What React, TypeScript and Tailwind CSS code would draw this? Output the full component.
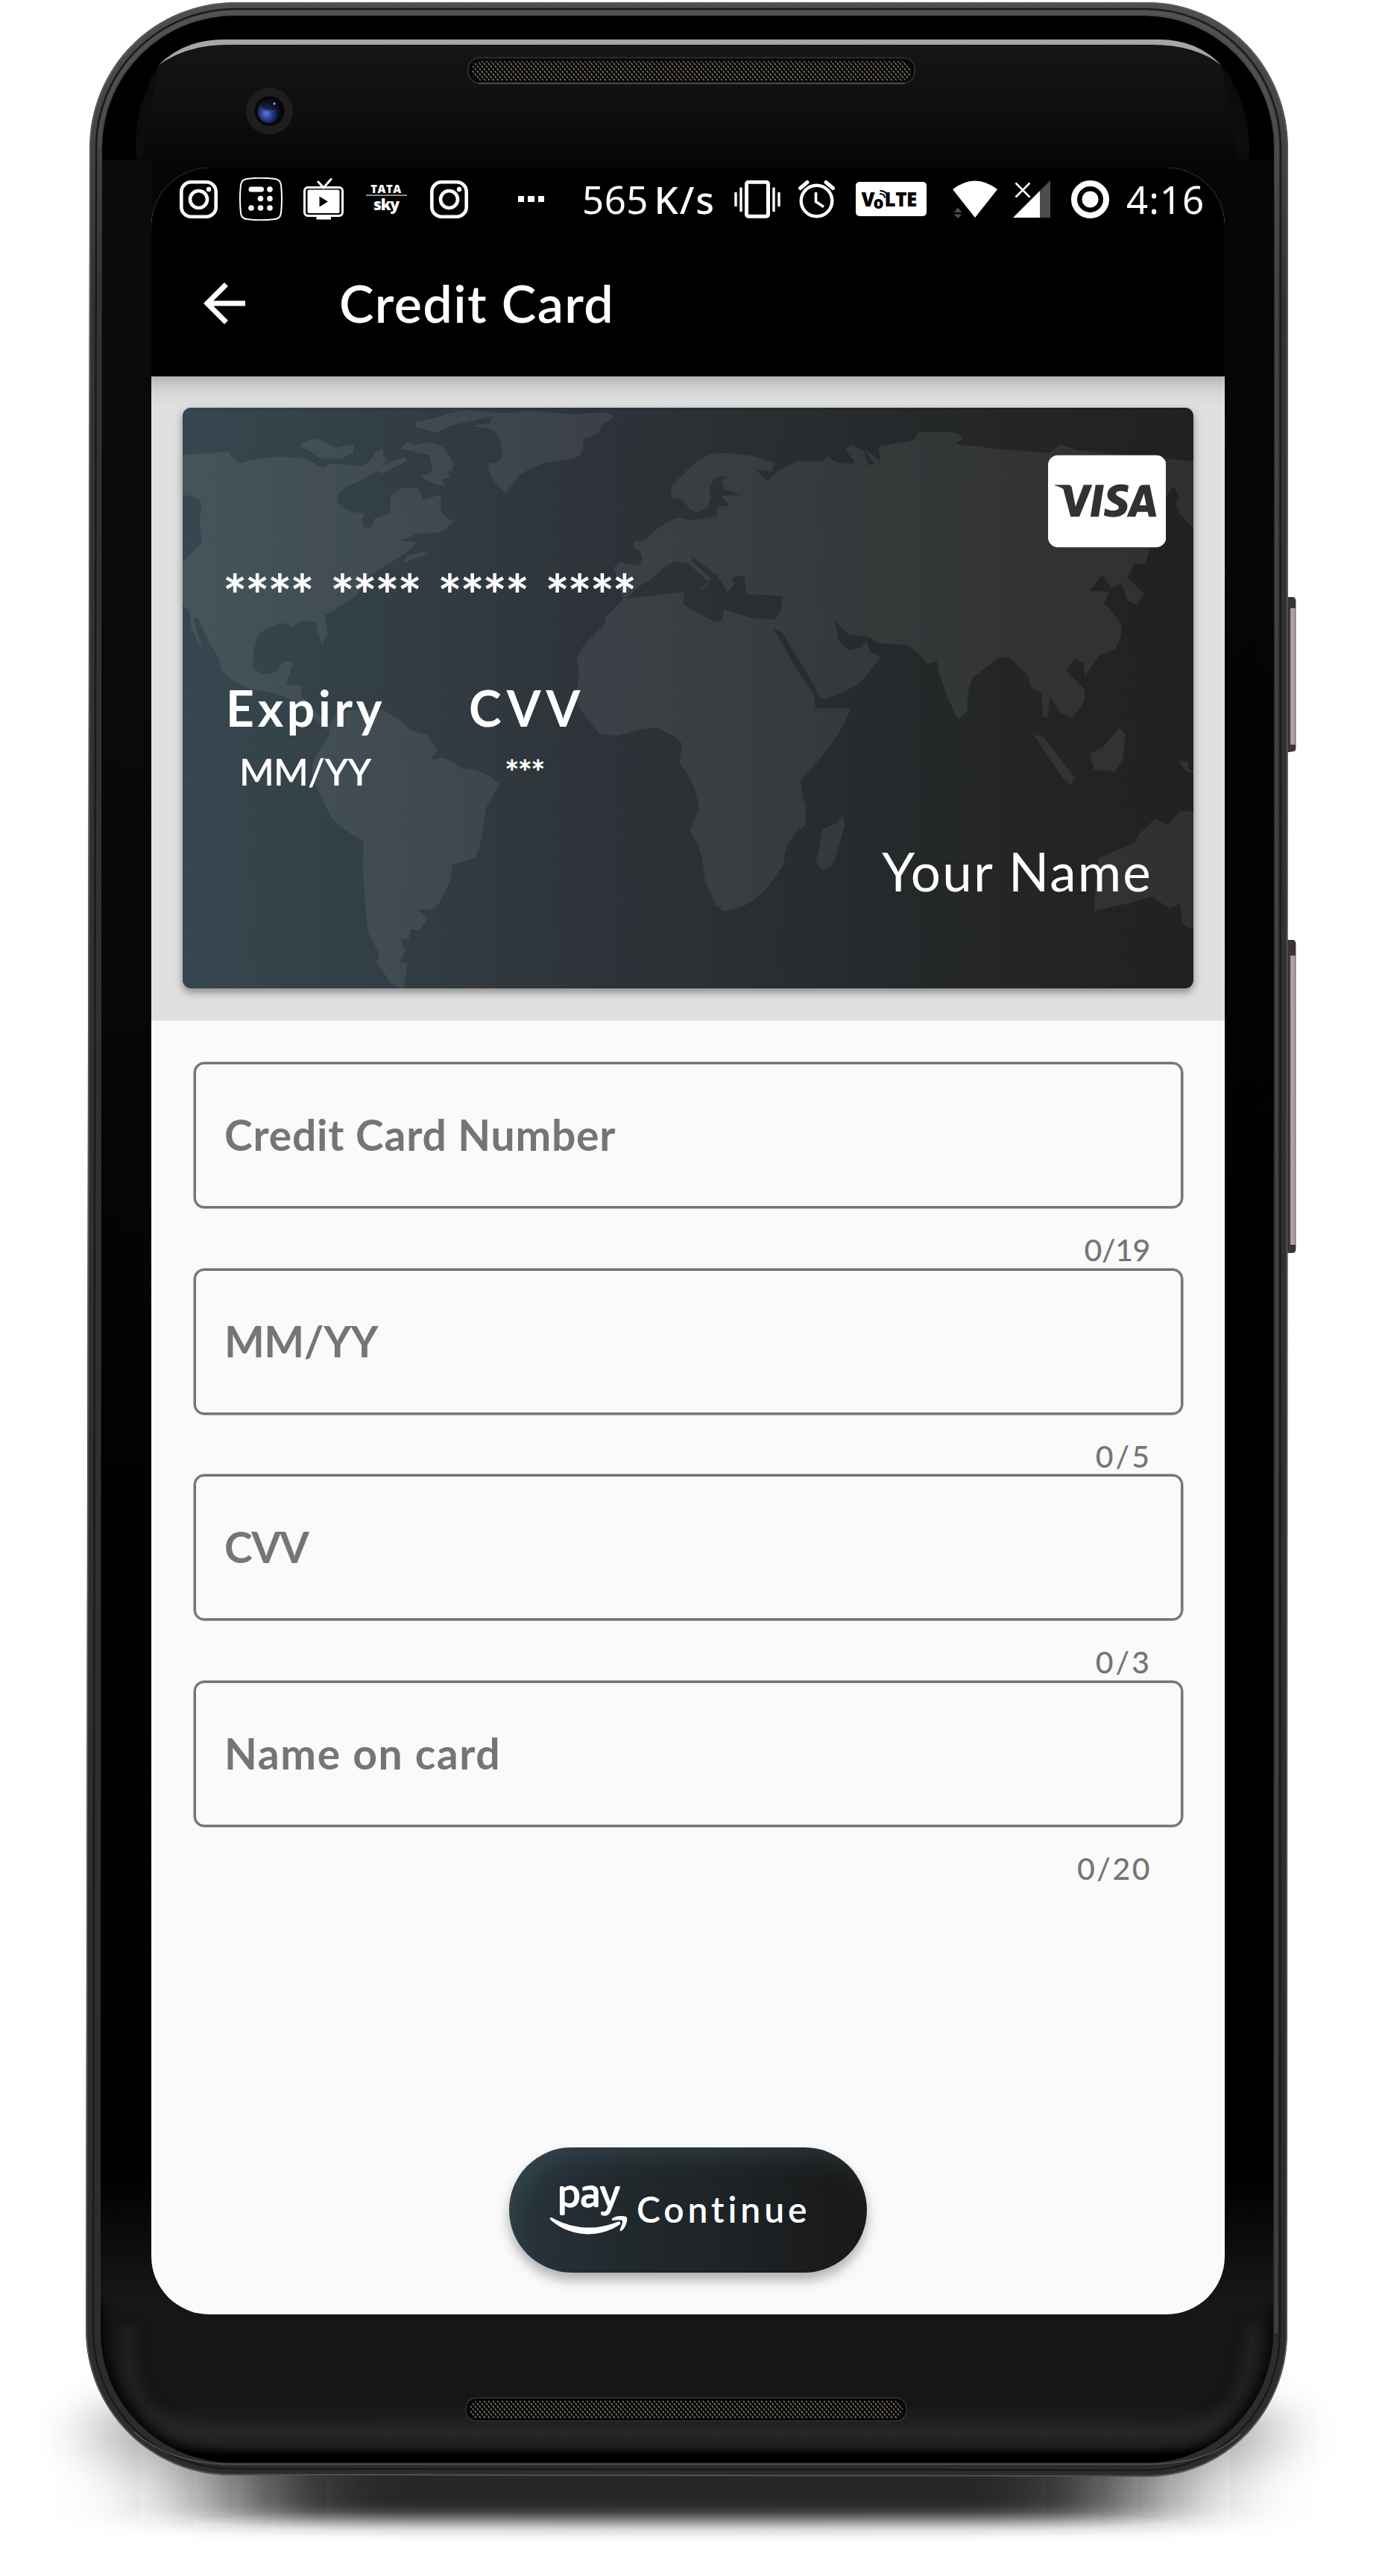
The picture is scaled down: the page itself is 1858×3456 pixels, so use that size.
import React from 'react';
import { MdArrowBack } from 'react-icons/md';
import { FaAmazonPay, FaCcVisa } from 'react-icons/fa';

/* ---------- Device ---------- */

function DeviceFrame() {
  return (
    <svg className="absolute inset-0" width="1858" height="3456" viewBox="0 0 1858 3456" aria-hidden="true">
      <defs>
        <filter id="floor" x="-40%" y="-200%" width="180%" height="500%">
          <feGaussianBlur stdDeviation="100 12" />
        </filter>
        <filter id="halo" x="-30%" y="-100%" width="160%" height="300%">
          <feGaussianBlur stdDeviation="38 30" />
        </filter>
        <filter id="soft8" x="-10%" y="-30%" width="120%" height="160%">
          <feGaussianBlur stdDeviation="8" />
        </filter>
        <linearGradient id="rim" x1="0" y1="0" x2="0" y2="1">
          <stop offset="0" stopColor="#4e4e4e" />
          <stop offset="0.05" stopColor="#444444" />
          <stop offset="0.12" stopColor="#333333" />
          <stop offset="1" stopColor="#2c2c2c" />
        </linearGradient>
        <linearGradient id="glass" gradientUnits="userSpaceOnUse" x1="0" y1="60" x2="0" y2="3306">
          <stop offset="0" stopColor="#151515" />
          <stop offset="0.025" stopColor="#0f0f0f" />
          <stop offset="0.05" stopColor="#060606" />
          <stop offset="0.2" stopColor="#050505" />
          <stop offset="0.5" stopColor="#010101" />
          <stop offset="0.88" stopColor="#000000" />
          <stop offset="0.93" stopColor="#161616" />
          <stop offset="0.975" stopColor="#161616" />
          <stop offset="0.988" stopColor="#232323" />
          <stop offset="0.993" stopColor="#1b1b1b" />
          <stop offset="0.9965" stopColor="#000000" />
          <stop offset="1" stopColor="#000000" />
        </linearGradient>
        <linearGradient id="leftBezel" x1="0" y1="0" x2="0" y2="1">
          <stop offset="0" stopColor="#0c0c0c" />
          <stop offset="0.4" stopColor="#0b0b0b" />
          <stop offset="1" stopColor="#0b0b0b" stopOpacity="0" />
        </linearGradient>
        <linearGradient id="metal" x1="0" y1="0" x2="1" y2="0">
          <stop offset="0" stopColor="#2a2628" />
          <stop offset="0.5" stopColor="#3a3537" />
          <stop offset="0.6" stopColor="#b3a9aa" />
          <stop offset="0.9" stopColor="#a39a9b" />
          <stop offset="1" stopColor="#5a5355" />
        </linearGradient>
        <pattern id="mesh" width="6" height="7" patternUnits="userSpaceOnUse">
          <path d="M1 0.5l1.600 2.600M4 4l1.600 2.600" stroke="#9c917e" strokeWidth="1.300" />
        </pattern>
        <radialGradient id="lens" cx="0.4" cy="0.6" r="0.55">
          <stop offset="0" stopColor="#5a7be0" />
          <stop offset="0.45" stopColor="#2b3f93" />
          <stop offset="1" stopColor="#0a0d1c" />
        </radialGradient>
        <clipPath id="glassClip">
          <path d="M137 198A178 178 0 0 1 315 21H1534A176 176 0 0 1 1709 198L1708 3130A170 174 0 0 1 1538 3304H312A178 176 0 0 1 135 3128Z" />
        </clipPath>
      </defs>

      <ellipse cx="921" cy="3265" rx="815" ry="95" fill="#000" opacity="0.24" filter="url(#halo)" />
      <rect x="312" y="3230" width="1215" height="152" fill="#262626" filter="url(#floor)" />

      <rect x="1722" y="801" width="16.500" height="208" rx="5" fill="url(#metal)" />
      <rect x="1722" y="1261" width="16.500" height="420" rx="5" fill="url(#metal)" />
      <path d="M1727 801h7q4 0 4 5v10h-11zM1727 999h11v5q0 4-4 4h-7zM1727 1261h7q4 0 4 5v16h-11zM1727 1670h11v7q0 4-4 4h-7z" fill="#3a3436" />

      <path d="M120 198A195 195 0 0 1 315 3H1540A188 195 0 0 1 1728 198L1727 3130A188 193 0 0 1 1539 3323L310 3321A195 195 0 0 1 115 3126Z" fill="url(#rim)" />
      <path d="M121 198A195 195 0 0 1 315 4H1540A187 195 0 0 1 1727 198L1726 3130A187 192 0 0 1 1539 3322L310 3320A194 194 0 0 1 116 3126Z" fill="none" stroke="#5c5c5c" strokeWidth="1.500" />
      <path d="M129 198A187 186 0 0 1 315 12H1538A181 186 0 0 1 1718 198L1717 3130A179 184 0 0 1 1539 3314L310 3312A186 185 0 0 1 125 3126Z" fill="none" stroke="#1a1a1a" strokeWidth="2.500" />
      <path d="M133 198A183 182 0 0 1 315 16.500H1537A176 182 0 0 1 1713 198L1712 3130" fill="none" stroke="#5c5c5c" strokeWidth="4" opacity="0.45" />

      <g clipPath="url(#glassClip)">
        <rect x="100" y="0" width="1660" height="3400" fill="#000" />
        <path d="M182 215V190Q186 62 310 57H1536Q1668 62 1676 190V215Z" fill="url(#glass)" filter="url(#soft8)" />
        <path d="M212 90Q246 60 310 60H1545Q1606 60 1639 90L1660 215H190Z" fill="url(#glass)" />
        <rect x="100" y="215" width="1660" height="3100" fill="url(#glass)" />
        <rect x="137" y="215" width="66" height="1900" fill="url(#leftBezel)" opacity="0.8" />
        <path d="M172 3120V3150C172 3235 215 3264 300 3264H1560C1640 3264 1680 3225 1680 3120" fill="none" stroke="#2a2a2a" strokeWidth="20" opacity="0.55" filter="url(#soft8)" />
        <path d="M128 3090V3130A186 178 0 0 0 312 3308H1540A180 178 0 0 0 1718 3130V3090" fill="none" stroke="#000" strokeWidth="22" filter="url(#soft8)" />
      </g>
      <path d="M180 3263Q230 3306 312 3306H1540Q1620 3306 1664 3266" fill="none" stroke="#565656" strokeWidth="1.500" />

      <path d="M212 88Q246 53 300 53H1555Q1606 53 1639 88Q1604 60 1545 60H306Q250 60 212 88Z" fill="#a6a6a6" />

      <rect x="628" y="77.500" width="599" height="34" rx="15" fill="#080808" stroke="#2c2c2c" strokeWidth="2" />
      <rect x="633" y="82" width="589" height="26" rx="12" fill="url(#mesh)" />
      <path d="M642 112H1214" stroke="#555" strokeWidth="1.500" />
      <rect x="625" y="3217" width="591" height="31" rx="14" fill="#070707" stroke="#333" strokeWidth="1.500" />
      <rect x="630" y="3221" width="581" height="24" rx="11" fill="url(#mesh)" />

      <circle cx="361.500" cy="149" r="31.500" fill="#1f1d1d" />
      <circle cx="361.500" cy="149" r="20" fill="#070709" />
      <ellipse cx="360.500" cy="149" rx="15" ry="16" fill="url(#lens)" />
      <ellipse cx="362" cy="140" rx="12" ry="8" fill="#0b0d18" opacity="0.6" />
      <circle cx="368" cy="139" r="1.500" fill="#c9a3d8" />
    </svg>
  );
}

/* ---------- Status bar ---------- */

function InstagramGlyph({ className }: { className: string }) {
  return (
    <svg className={className} viewBox="0 0 51 51" fill="none" stroke="#fff">
      <rect x="2.300" y="2.300" width="46.400" height="46.400" rx="13" strokeWidth="4.600" />
      <circle cx="25.500" cy="25.500" r="11.500" strokeWidth="4.600" />
      <circle cx="39" cy="12" r="3.200" fill="#fff" stroke="none" />
    </svg>
  );
}

function CalculatorGlyph() {
  return (
    <svg className="ml-[29px] h-[58px] w-[58px]" viewBox="0 0 58 58" fill="#fff">
      <path d="M10 2Q29 -0.500 48 2Q55 3 56 10Q58 29 56 48Q55 55 48 56Q29 58.500 10 56Q3 55 2 48Q0 29 2 10Q3 3 10 2Z" fill="none" stroke="#fff" strokeWidth="2" />
      <rect x="12.500" y="12.500" width="20.500" height="7" rx="3.500" />
      <circle cx="41" cy="16" r="3.800" />
      <circle cx="28.500" cy="28.500" r="3.800" />
      <circle cx="41" cy="28.500" r="3.800" />
      <circle cx="16" cy="41" r="3.800" />
      <circle cx="28.500" cy="41" r="3.800" />
      <circle cx="41" cy="41" r="3.800" />
    </svg>
  );
}

function TvGlyph() {
  return (
    <svg className="ml-[28px] h-[56px] w-[54px]" viewBox="0 0 54 56" fill="none" stroke="#fff">
      <path d="M20 5L27 13M37 1.500L27 13" strokeWidth="3" strokeLinecap="round" />
      <rect x="1.500" y="12.500" width="51" height="38" rx="4.500" strokeWidth="3" />
      <rect x="5.500" y="15.500" width="43" height="31.500" rx="2" fill="#fff" stroke="none" />
      <path d="M21.500 24.500L33 31.500L21.500 38.500Z" fill="#000" stroke="none" />
      <path d="M17.500 52H37V55.500H17.500Z" fill="#fff" stroke="none" />
    </svg>
  );
}

function TataSkyGlyph() {
  return (
    <div className="ml-[30px] flex h-[42px] w-[55px] flex-col items-center font-['Open_Sans',sans-serif] text-white">
      <span className="text-[15px] leading-[14px] font-extrabold tracking-[0.500px]">TATA</span>
      <span className="mt-[1px] h-[2px] w-full bg-[#8a8a8a]" />
      <span className="text-[21px] leading-[22px] font-extrabold tracking-[-1.200px]">sky</span>
    </div>
  );
}

function VibrateGlyph() {
  return (
    <svg className="ml-[25px] h-[51px] w-[62px]" viewBox="0 0 62 51" fill="none" stroke="#fff">
      <rect x="16.500" y="2.300" width="29" height="46" rx="2.500" strokeWidth="5" />
      <path d="M9 9.500V42M53 9.500V42M2 16V35M60 16V35" strokeWidth="3.400" />
    </svg>
  );
}

function AlarmGlyph() {
  return (
    <svg className="ml-[24px] h-[51px] w-[49px]" viewBox="0 0 49 51" fill="none" stroke="#fff">
      <circle cx="24.500" cy="27.500" r="20.800" strokeWidth="4.400" />
      <path d="M23.500 16V28.500L34 35.500" strokeWidth="3.600" />
      <path d="M2.500 10.500L12 2.500M46.500 10.500L37 2.500" strokeWidth="5" strokeLinecap="round" />
    </svg>
  );
}

function VolteGlyph() {
  return (
    <div className="relative ml-[28px] flex h-[46px] w-[95px] items-center rounded-[5px] bg-white font-['Open_Sans',sans-serif] font-extrabold text-black">
      <span className="ml-[8px] text-[26px] leading-none">V</span>
      <span className="mt-[7px] -ml-[2px] text-[22px] leading-none">o</span>
      <span className="ml-[1px] text-[26px] leading-none tracking-[-0.500px]">LTE</span>
      <svg className="absolute top-[10px] left-[30px] h-[14px] w-[16px]" viewBox="0 0 16 14" fill="none" stroke="#000" strokeWidth="2">
        <path d="M2.500 2Q11 1.500 13 10.500M2 6Q8 5.500 9.500 11.500" />
      </svg>
    </div>
  );
}

function WifiGlyph() {
  return (
    <svg className="ml-[35px] h-[51px] w-[60px]" viewBox="0 0 60 51">
      <path d="M0 12Q30 -11 60 12L30 50Z" fill="#fff" />
      <path d="M1.500 43L7 36.500L12.500 43ZM1.500 45.500L7 51L12.500 45.500Z" fill="#4c4c4c" />
    </svg>
  );
}

function SignalGlyph() {
  return (
    <svg className="ml-[21px] h-[50px] w-[50px]" viewBox="0 0 50 50">
      <path d="M50 0V50H36V14Z" fill="#4c4c4c" />
      <path d="M36 14V50H0Z" fill="#fff" />
      <path d="M3.500 3.500L22.500 22.500M22.500 3.500L3.500 22.500" stroke="#fff" strokeWidth="2.600" />
    </svg>
  );
}

function StatusBar() {
  return (
    <div className="flex h-[84px] items-center pl-[37.500px] font-['Noto_Sans',sans-serif] text-[51px] leading-none whitespace-nowrap text-white">
      <InstagramGlyph className="h-[51px] w-[51px]" />
      <CalculatorGlyph />
      <TvGlyph />
      <TataSkyGlyph />
      <InstagramGlyph className="ml-[31px] h-[51px] w-[51px]" />
      <div className="ml-[67px] flex gap-[5px]">
        <span className="size-[8.500px] bg-white" />
        <span className="size-[8.500px] bg-white" />
        <span className="size-[8.500px] bg-white" />
      </div>
      <span className="ml-[51px] w-[96.500px] tracking-[0.500px]">565</span>
      <span className="w-[82px] font-medium tracking-[2px]">K/s</span>
      <VibrateGlyph />
      <AlarmGlyph />
      <VolteGlyph />
      <WifiGlyph />
      <SignalGlyph />
      <svg className="ml-[28px] h-[51px] w-[51px]" viewBox="0 0 51 51">
        <circle cx="25.500" cy="25.500" r="21.500" fill="none" stroke="#fff" strokeWidth="8" />
        <circle cx="25.500" cy="25.500" r="11" fill="#fff" />
      </svg>
      <span className="ml-[23.500px] tracking-[1px]">4:16</span>
    </div>
  );
}

/* ---------- Card ---------- */

function WorldMap() {
  return (
    <svg className="absolute inset-0 h-full w-full" viewBox="0 0 1355 779" preserveAspectRatio="none" aria-hidden="true">
      <g fill="#ffffff" fillOpacity="0.07" fillRule="evenodd">
        <g transform="translate(-25 -27) scale(0.4592 0.5485)">
          <path d="M40 165L190 157Q205 185 225 185Q320 160 415 175L465 197L485 185L575 192Q605 185 615 158L640 150L640 165L652 178L640 188L705 170L710 178L640 210L620 203Q600 220 545 238Q500 260 507 275Q515 305 585 308Q565 345 600 346Q612 340 615 320L660 307L662 265Q690 235 745 248L755 275L808 262L808 300Q830 328 847 325Q820 355 800 355L740 358L685 375L740 378L705 405L640 440Q590 460 560 510L470 558L478 605L462 628L450 600L443 575Q400 562 375 587L345 575Q290 590 275 605Q255 650 260 685Q290 715 335 690Q345 660 377 675L355 727L403 730L400 755L475 820L482 840L440 812L375 765Q330 745 270 740Q210 730 165 690L162 665L130 620L100 565L85 565L112 640L80 590L75 545L40 525V440L112 378Q98 330 110 290Q108 262 40 262Z" />
          <path d="M690 150L710 132L735 140Q800 125 825 155L847 190L838 205L825 200L835 222L812 222L820 242L785 235L748 218L785 205L775 165L745 160Z" />
          <path d="M395 142Q425 120 460 128L500 147L553 138V160L515 175L450 172L430 158Z" />
          <path d="M695 430L710 410L770 400L768 408Z" />
          <path d="M733 85L800 72L870 55L1000 62L1080 57L1190 65L1295 60L1315 70L1275 95Q1275 118 1222 125Q1230 165 1200 172L1105 185L1040 212L998 258Q940 220 948 183Q985 190 987 160Q985 105 940 100L895 92L950 88L960 70L840 92L795 110L735 97Z" />
          <path d="M440 905L485 845L480 825L510 790L640 788L700 820L720 840Q760 845 770 850L797 885L780 910L810 905Q830 905 870 932Q930 930 980 970L945 1020Q935 1040 932 1080Q925 1120 908 1150L840 1168L838 1200L805 1260Q785 1285 740 1275L770 1300L745 1327L720 1325L715 1348L690 1350L705 1375L688 1405L710 1410L700 1470L665 1460L620 1405L628 1385L597 1335Q588 1290 580 1170L583 1110Q500 1070 485 1045L450 985Q430 960 432 925Z" />
        </g>
        <g transform="translate(655 -27) scale(0.5612 0.5485)">
          <path d="M-137 440L-123 428L-78 435L-68 420L-74 400L-91 390L-89 375L-66 375L-33 345L0 325L16 318L50 325L108 315L112 290L140 290L120 265L165 262L130 250L120 232L130 215L105 220L90 245L95 270L85 295L60 305Q40 300 30 275L0 268V240L30 210Q70 165 110 160Q190 158 245 185L240 205L200 200L230 228Q260 195 300 180L360 180L375 168Q390 188 440 185L415 150L430 140L460 155L470 190L485 185L460 150L500 180L495 145L580 128L590 110Q640 105 685 112L695 125L680 138L780 150L900 160L930 140L965 152L1060 163L1270 182V345L1248 345L1215 310L1205 285L1212 265L1200 240L1183 265L1150 350L1143 390L1133 430L1105 432L1090 465L1130 505L1110 532L1090 520L1075 480L1050 490L1030 458L1000 497L1045 500L1035 528L1070 570Q1085 600 1060 640L1020 658L988 705L985 675L965 663L942 692L985 735Q1000 765 955 808L930 795L905 755L898 808L888 805L885 745L860 735L850 700Q830 685 815 665Q800 655 780 662L720 710Q705 740 708 790L685 812L665 770L640 700L635 670L610 675Q590 645 560 630L495 625L470 608L425 605L390 570L400 620L425 643L455 635L465 620L475 645L500 660L470 700Q455 730 368 762Q345 755 345 735L320 690L265 600L243 588L300 690L340 750L345 785L428 783Q420 820 370 890L310 960Q312 990 322 1030L320 1070Q265 1110 270 1165L235 1215Q190 1275 125 1280L105 1265L80 1205Q75 1120 44 1085L66 1030Q60 970 20 920L25 870L5 852L-33 832Q-80 835 -132 853L-172 845L-209 800L-230 760L-220 700L-226 665L-209 630L-160 580L-156 560L-115 518Z M-112 517L32 500L28 530L60 548L100 572L120 570L127 543L190 563L245 568Q262 560 267 510L180 505L175 460L145 465L150 480L135 500L110 460L45 410L55 430L95 468L80 490L65 495L90 475L40 430L10 425L-10 435L-50 470L-75 485L-100 508Z" />
          <path d="M410 1045L415 1070L395 1140L385 1170L360 1180L345 1160L355 1120L360 1080L395 1065Z" />
          <path d="M865 848L890 855L965 955L955 972L935 955Z" />
          <path d="M1000 895L1030 880L1070 833L1085 850L1080 905L1060 940L1010 935Z" />
          <path d="M1213 912L1235 915L1235 930L1260 950L1225 935Z" />
          <path d="M1270 1035L1215 1037L1185 1070L1155 1055L1120 1090L1105 1115L1020 1150L1015 1200L1010 1280L1090 1262L1150 1245L1190 1275L1215 1262L1220 1310L1235 1322H1270Z" />
        </g>
      </g>
    </svg>
  );
}

function CreditCard() {
  return (
    <div className="relative flex h-[779px] w-[1356px] flex-col overflow-hidden rounded-[11px] bg-[linear-gradient(90deg,#37474f_0%,#313c42_25%,#2d3339_40%,#2a3033_52%,#262a2c_68%,#232424_85%,#212121_100%)] whitespace-nowrap text-white">
      <WorldMap />
      <div className="relative mt-[55px] flex justify-end pr-[37px]">
        <FaCcVisa className="h-[141px] w-[158.500px]" />
      </div>
      <p className="relative mt-[17px] ml-[54px] text-[76px] leading-none font-bold tracking-[-2.200px] [word-spacing:7.500px]">**** **** **** ****</p>
      <div className="relative mt-[81px] flex">
        <div className="ml-[58px] w-[326px]">
          <p className="text-[66px] leading-none font-bold tracking-[4.700px]">Expiry</p>
          <p className="mt-[27px] ml-[18px] text-[50px] leading-none font-semibold tracking-[-0.800px]">MM/YY</p>
        </div>
        <div>
          <p className="text-[66px] leading-none font-bold tracking-[7px]">CVV</p>
          <p className="mt-[30px] ml-[48px] text-[46px] leading-none font-bold tracking-[-2px]">***</p>
        </div>
      </div>
      <p className="relative mt-[73px] pr-[55px] text-right text-[71px] leading-none tracking-[2.200px]">Your Name</p>
    </div>
  );
}

/* ---------- Form ---------- */

type FieldProps = { label: string; labelClass: string; counter: string; counterClass: string };

const fields: FieldProps[] = [
  { label: 'Credit Card Number', labelClass: 'tracking-[0.800px]', counter: '0/19', counterClass: 'tracking-[-0.400px] mr-[44px]' },
  { label: 'MM/YY', labelClass: 'tracking-[-0.500px]', counter: '0/5', counterClass: 'tracking-[3px] mr-[42px]' },
  { label: 'CVV', labelClass: 'tracking-[-1.500px]', counter: '0/3', counterClass: 'tracking-[3px] mr-[42px]' },
  { label: 'Name on card', labelClass: 'tracking-[1.600px]', counter: '0/20', counterClass: 'tracking-[2.500px] mr-[42px]' },
];

function Field({ label, labelClass, counter, counterClass }: FieldProps) {
  return (
    <div className="h-[276.700px] text-[#757575]">
      <div className="flex h-[196px] items-center rounded-[14px] border-[3px] border-[#757575] pl-[38px] shadow-[0_0_0_0.500px_#757575]">
        <span className={`-mt-[1px] text-[57px] leading-none font-bold ${labelClass}`}>{label}</span>
      </div>
      <div className="mt-[35px] flex justify-end">
        <span className={`text-[41px] leading-none font-medium ${counterClass}`}>{counter}</span>
      </div>
    </div>
  );
}

function ContinueButton() {
  return (
    <button className="mx-auto mt-auto mb-[56px] flex h-[168px] w-[480px] shrink-0 items-center rounded-full bg-[linear-gradient(90deg,#27343a_0%,#242c34_20%,#21282b_35%,#1d2225_65%,#1a1a1a_90%,#191919_100%)] pl-[53px] text-white shadow-[0_10px_16px_rgba(0,0,0,0.3),inset_16px_24px_36px_-12px_rgba(80,110,120,0.32)]">
      <FaAmazonPay className="h-[85.500px] w-[107px] stroke-white stroke-[9px]" />
      <span className="-mt-[3px] ml-[11px] text-[48px] leading-none font-semibold tracking-[4.900px]">Continue</span>
    </button>
  );
}

export default function App() {
  return (
    <div className="relative h-[3456px] w-[1858px] overflow-hidden bg-white pt-[225px] pl-[203px] font-[Lato,sans-serif]">
      <DeviceFrame />
      <main className="relative flex h-[2880px] w-[1440px] flex-col overflow-hidden rounded-[78px] bg-[#fafafa]">
        <div className="bg-black">
          <StatusBar />
          <header className="flex h-[196px] items-center pl-[56px] text-white">
            <MdArrowBack className="size-[84px]" />
            <h1 className="-mt-[2px] ml-[112px] text-[70px] leading-none font-semibold tracking-[1.400px]">Credit Card</h1>
          </header>
        </div>
        <section className="bg-[linear-gradient(180deg,#b4b4b4_0px,#cbcbcb_12px,#d9d9d9_24px,#e0e0e0_42px)] px-[42px] pt-[42px] pb-[43px]">
          <div className="rounded-[11px] shadow-[0_5px_12px_rgba(0,0,0,0.4)]">
            <CreditCard />
          </div>
        </section>
        <form className="flex flex-1 flex-col pt-[56px]">
          <div className="pr-[56px] pl-[57px]">
            {fields.map((field) => (
              <Field key={field.label} {...field} />
            ))}
          </div>
          <ContinueButton />
        </form>
      </main>
    </div>
  );
}
